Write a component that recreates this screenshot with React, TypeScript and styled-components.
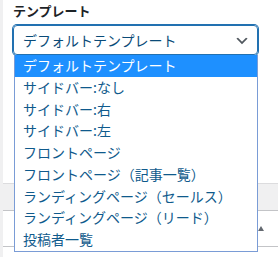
import React from 'react';
import styled, { createGlobalStyle } from 'styled-components';

const GlobalStyle = createGlobalStyle`
  html, body {
    margin: 0;
    padding: 0;
    background: #fff;
  }
  body {
    font-family: "Noto Sans CJK JP", "Noto Sans", sans-serif;
    overflow: hidden;
  }
`;

const Page = styled.div`
  width: 278px;
  height: 257px;
  display: flex;
  overflow: hidden;
`;

const Edge = styled.div`
  width: 3px;
  flex: none;
  background: #f0f0f1;
`;

const Panel = styled.div`
  flex: 1;
  display: flex;
  flex-direction: column;
`;

const Field = styled.div`
  padding: 2px 20px 0 10px;
  position: relative;
`;

const Label = styled.div`
  font-size: 13px;
  line-height: 18px;
  font-weight: 600;
  color: #1d2327;
  margin-bottom: 5px;
`;

const SelectBox = styled.div`
  height: 30px;
  box-sizing: border-box;
  border: 1px solid #2271b1;
  box-shadow: 0 0 0 1px #2271b1;
  border-radius: 4px;
  display: flex;
  align-items: center;
  justify-content: space-between;
  padding: 0 7px 0 9px;
  color: #0a4b78;
  font-size: 14px;
`;

const Chevron = styled.svg`
  width: 16px;
  height: 16px;
  margin-top: 2px;
  fill: #50575e;
`;

const Popup = styled.div`
  position: absolute;
  left: 11px;
  right: 20px;
  top: 55px;
  border: 1px solid #7a9cd6;
  border-top: none;
  background: #fff;
  z-index: 2;
`;

const Option = styled.div<{ $active?: boolean }>`
  height: 21.75px;
  line-height: 21.75px;
  padding-left: 8px;
  font-size: 14px;
  white-space: nowrap;
  color: ${(p) => (p.$active ? '#fff' : '#0f5a8c')};
  background: ${(p) => (p.$active ? '#1e90ff' : 'transparent')};
`;

const Behind = styled.div`
  margin-top: 128px;
  display: flex;
  flex-direction: column;
`;

const HeadRow = styled.div`
  height: 26px;
  background: #f0f0f1;
  border-top: 1px solid #dcdcde;
  border-bottom: 1px solid #c3c4c7;
`;

const BodyRow = styled.div`
  height: 35px;
  border-bottom: 1px solid #c3c4c7;
  display: flex;
  align-items: center;
  justify-content: flex-end;
  padding-right: 14px;
`;

const SortArrow = styled.span`
  width: 0;
  height: 0;
  border-left: 3px solid transparent;
  border-right: 3px solid transparent;
  border-bottom: 5px solid #646970;
  margin-top: -1px;
`;

const options = [
  'デフォルトテンプレート',
  'サイドバー:なし',
  'サイドバー:右',
  'サイドバー:左',
  'フロントページ',
  'フロントページ（記事一覧）',
  'ランディングページ（セールス）',
  'ランディングページ（リード）',
  '投稿者一覧',
];

const App: React.FC = () => {
  return (
    <Page>
      <GlobalStyle />
      <Edge />
      <Panel>
        <Field>
          <Label>テンプレート</Label>
          <SelectBox>
            <span>{options[0]}</span>
            <Chevron viewBox="0 0 20 20">
              <path d="M5 6l5 5 5-5 2 1-7 7-7-7 2-1z" />
            </Chevron>
          </SelectBox>
          <Popup>
            {options.map((o, i) => (
              <Option key={o} $active={i === 0}>
                {o}
              </Option>
            ))}
          </Popup>
        </Field>
        <Behind>
          <HeadRow />
          <BodyRow>
            <SortArrow />
          </BodyRow>
        </Behind>
      </Panel>
    </Page>
  );
};

export default App;
